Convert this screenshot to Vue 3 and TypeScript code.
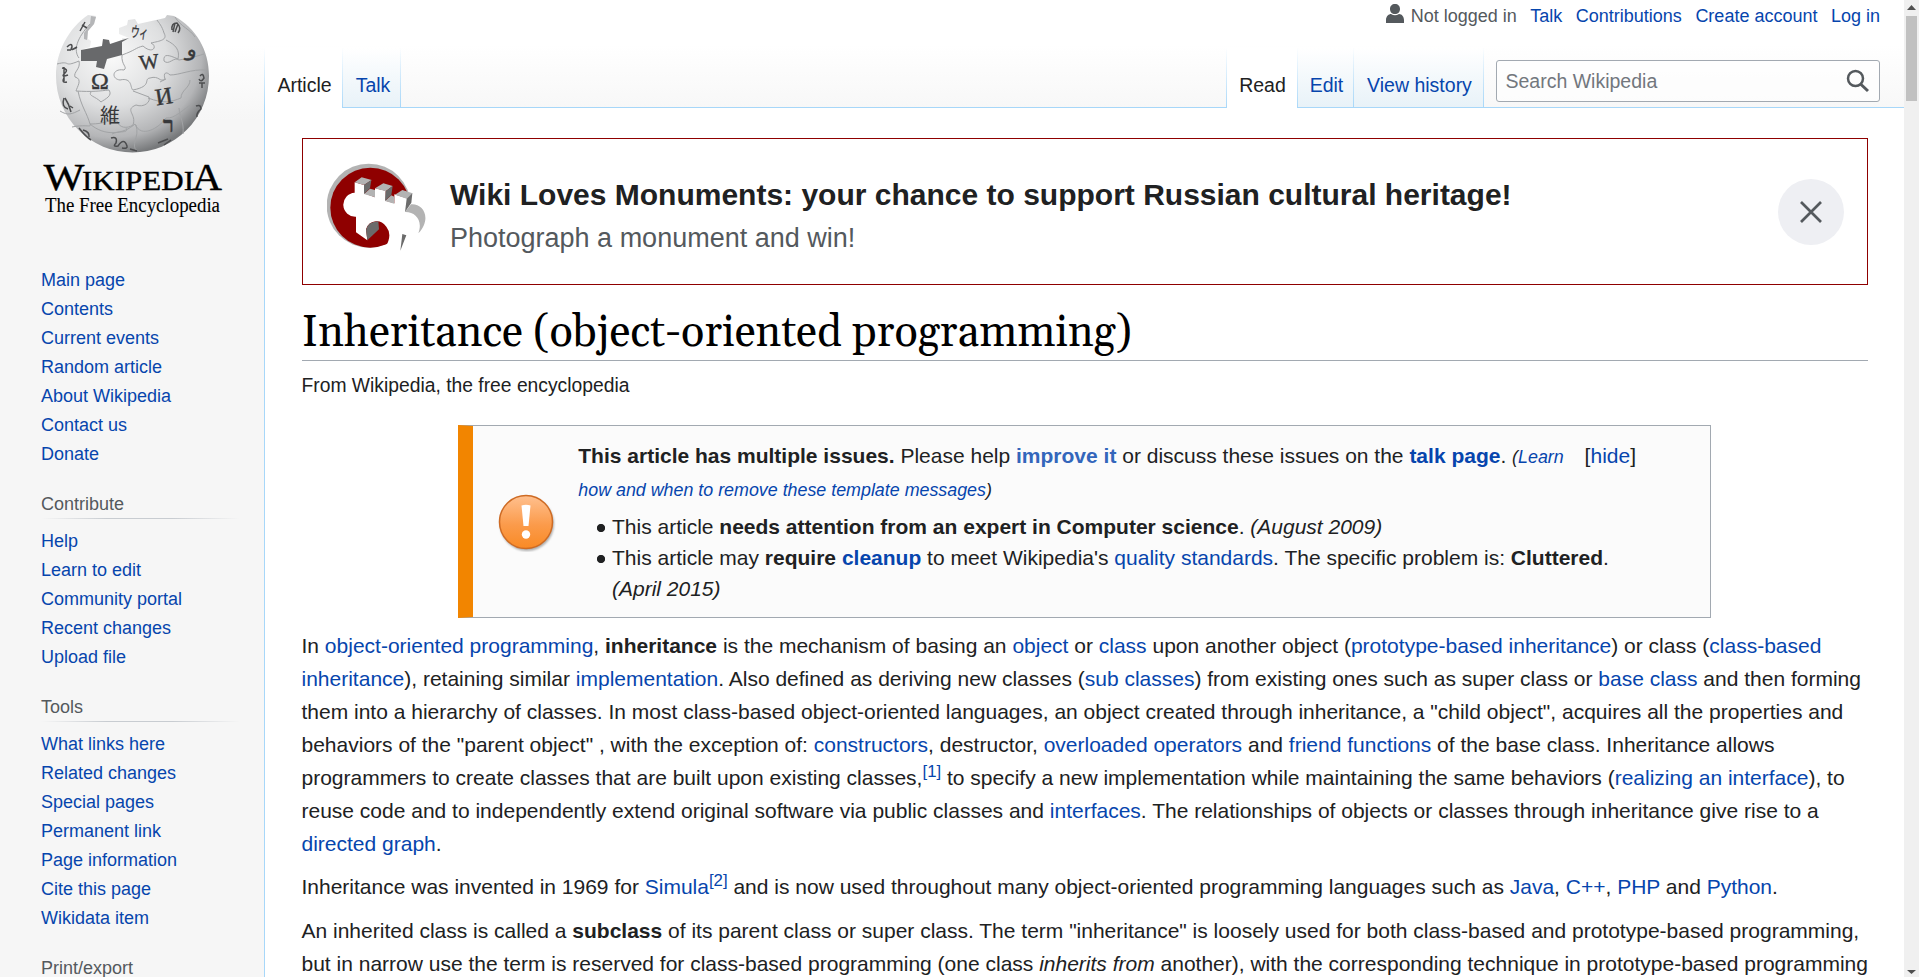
<script setup lang="ts">
interface Portal { title: string; links: string[] }
const mainLinks: string[] = ['Main page', 'Contents', 'Current events', 'Random article', 'About Wikipedia', 'Contact us', 'Donate']
const portals: Portal[] = [
  { title: 'Contribute', links: ['Help', 'Learn to edit', 'Community portal', 'Recent changes', 'Upload file'] },
  { title: 'Tools', links: ['What links here', 'Related changes', 'Special pages', 'Permanent link', 'Page information', 'Cite this page', 'Wikidata item'] },
  { title: 'Print/export', links: [] },
]
const personal: string[] = ['Talk', 'Contributions', 'Create account', 'Log in']
</script>

<template>
  <div class="page">
    <aside class="side">
      <svg class="logo" width="264" height="240" viewBox="0 0 264 240">
        <defs>
          <radialGradient id="globe" cx="0.36" cy="0.3" r="0.72">
            <stop offset="0" stop-color="#fafafa" />
            <stop offset="0.5" stop-color="#dedfe0" />
            <stop offset="0.82" stop-color="#b4b5b7" />
            <stop offset="1" stop-color="#77797b" />
          </radialGradient>
        </defs>
        <path d="M88 15 L96 16 L94 24 L88 31 L88 39 L91 41 L90 47 L81 50 L81 60 L122 54 L122 38 L129 38 L119 34 L119 28 L127 25 L128 20 L135 19 L138 24 L165 18 L167 15 L174 16 C196 28 209 50 209 76 A76.500 76.500 0 0 1 56 76 C56 51 69 28 88 15Z" fill="url(#globe)" />
        <path d="M91 16 L96 17 L94 24 L88 31 L87 40 L84 39 L84 33 L90 24Z" fill="#b5b6b8" />
        <path d="M81 50 L102 46 L103 39 L109 40 L110 44 L122 40 L129 38 L122 42 L122 55 L107 59 L104 69 L96 67 L97 61 L81 61Z" fill="#68696b" />
        <g fill="none" stroke="#a1a3a5" stroke-width="1">
          <path d="M57 64 C72 60 62 68 79 61 C81 69 73 72 75 77 C83 79 77 87 76 91 C92 92 100 91 109 90 C113 96 105 99 101 102 C95 96 88 96 91 92" />
          <path d="M122 55 C121 65 128 67 124 70 C112 68 111 79 120 80 C133 77 130 89 133 90 C153 86 143 79 150 78 C159 75 160 83 165 79 C163 73 166 71 170 75 C180 75 191 69 206 70" />
          <path d="M122 55 C136 50 135 48 143 46 C153 55 158 46 151 43 C160 41 168 40 164 33 C162 26 159 23 157 20" />
          <path d="M166 40 C176 45 180 50 178 59 C169 55 163 53 164 61 C169 66 174 56 179 60 C191 58 201 55 204 54" />
          <path d="M78 91 C81 106 87 113 90 124 C107 124 108 119 117 121 C119 128 127 129 133 125 C137 114 124 110 136 105 C144 108 151 102 149 97 L133 91" />
          <path d="M148 98 C164 104 171 102 181 98 C181 90 190 88 190 80 M160 82 L166 79 M60 111 C68 116 72 114 80 110 M72 127 C86 124 92 128 90 124 C105 137 124 134 135 124 C141 139 159 128 166 118 C175 119 183 109 191 105" />
          <path d="M136 125 C140 137 130 145 137 151 M112 134 C120 130 129 134 126 128 M179 108 C180 119 184 121 183 134 M90 24 C77 38 73 50 79 58 M175 17 C181 27 190 29 195 37" />
        </g>
        <g fill="#37383a" stroke="#37383a" stroke-width="0.400" font-family="'Liberation Serif','Noto Sans CJK JP',serif">
          <text x="91" y="89" font-size="24">Ω</text>
          <text x="139" y="69" font-size="21" transform="rotate(-7 148 62)">W</text>
          <text x="155" y="104" font-size="24" transform="rotate(-9 165 95)">И</text>
          <text x="100" y="123" font-size="20" stroke="none">維</text>
          <text x="163" y="132" font-size="22" font-weight="bold">ר</text>
          <text x="131" y="38" font-size="15" transform="rotate(8 140 32)" textLength="17" lengthAdjust="spacingAndGlyphs">ウィ</text>
          <text x="187" y="56" font-size="21" transform="rotate(15 192 50)">و</text>
        </g>
        <g fill="none" stroke="#4c4d4f" stroke-width="1.500">
          <path d="M80 31 l5 -9 M82 25 l5 3 M67 47 q5 -5 5 0 q-3 5 5 0 M67 50 l4 0 M62 68 q7 1 3 5 q-5 5 3 2 M64 78 q-3 5 3 4 M64 67 v14 M64 98 q-3 9 4 11 M65 98 q4 6 6 14 M70 106 l3 2 M79 128 q7 9 12 12 M83 130 q7 2 6 7 M111 138 q7 -2 5 5 q-4 4 2 3 q6 -9 9 0 q1 3 -5 2 M158 143 l10 -4 M164 145 l7 -5 M130 149 l7 2 M196 106 q5 -2 5 3 q-5 4 -4 8 M200 76 q3 -4 4 2 q-3 5 -5 1 M199 83 h6 M202 83 v5" />
          <path d="M172 30 q-1 -7 5 -7 q5 5 1 10 M175 23 l-2 9 M178 24 l-3 8" />
        </g>
        <g fill="#000" stroke="#000" font-family="'Liberation Serif',serif">
          <g stroke-width="0.350">
            <text x="43.500" y="190" font-size="38" textLength="41" lengthAdjust="spacingAndGlyphs">W</text>
            <text x="82" y="190" font-size="28" textLength="112" lengthAdjust="spacingAndGlyphs">IKIPEDI</text>
            <text x="192" y="190" font-size="38" textLength="30" lengthAdjust="spacingAndGlyphs">A</text>
          </g>
          <text x="45" y="212" font-size="20.500" textLength="175" lengthAdjust="spacingAndGlyphs" stroke-width="0.100">The Free Encyclopedia</text>
        </g>
      </svg>
      <nav class="portal first"><a v-for="l in mainLinks" :key="l">{{ l }}</a></nav>
      <nav v-for="p in portals" :key="p.title" class="portal">
        <h3>{{ p.title }}</h3>
        <a v-for="l in p.links" :key="l">{{ l }}</a>
      </nav>
    </aside>

    <div class="main">
      <header class="head">
        <div class="personal">
          <svg width="18" height="20" viewBox="0 0 18 20"><path d="M9 0 C12 0 14 2 14 5 C14 8 12 10 9 10 C6 10 4 8 4 5 C4 2 6 0 9 0 M0 19 V16 C0 12 3 10 5 10 Q9 12.500 13 10 C16 10 18 13 18 16 V19Z" fill="#54595d" /></svg>
          <span class="anon">Not logged in</span>
          <a v-for="l in personal" :key="l">{{ l }}</a>
        </div>
        <div class="tabs">
          <div class="tab on article">Article</div>
          <div class="tab talk">Talk</div>
          <div class="gap"></div>
          <div class="tab on read">Read</div>
          <div class="tab edit">Edit</div>
          <div class="tab hist">View history</div>
          <div class="searchwrap">
            <div class="search">
              <span>Search Wikipedia</span>
              <svg width="24" height="24" viewBox="0 0 24 24" fill="none" stroke="#54595d" stroke-width="2.500"><circle cx="9.500" cy="9.500" r="7.500" /><path d="M14.500 15 L22 22" stroke-width="3" /></svg>
            </div>
          </div>
        </div>
      </header>

      <main class="content">
        <section class="banner">
          <svg class="wlm" width="101" height="90" viewBox="36 39 303 270">
            <circle cx="161" cy="167" r="126" fill="#b3b3b3" />
            <circle cx="166" cy="173" r="120" fill="#8f0000" />
            <path d="M119 97 L147 105 V130 L180 142 V115 L212 122 V152 L238 160 V133 L275 145 L293 118 L345 118 V330 H205 L210 295 Q234 255 214 230 Q200 212 183 214 Q160 216 153 238 L157 271 L123 247 V200 A36 36 0 1 1 119 128Z" fill="#fff" />
            <path d="M119 97 L140 82 L170 90 L147 105Z M147 132 L165 116 L180 120 V142Z M180 115 L205 100 L233 108 L212 124Z M210 153 L229 136 L238 140 V161Z M240 134 L262 120 L293 130 L275 146Z M270 186 L288 163 C325 160 352 205 310 250 C325 210 300 185 270 186Z" fill="#b3b3b3" />
            <path d="M147 105 L169 90 L165 115 L147 132Z M212 124 L233 108 L229 135 L210 153Z M275 146 L292 130 L289 158 L270 186Z M157 271 L153 240 Q158 215 190 214 L192 238Z M262 252 L274 256 L256 302Z" fill="#6b6b6b" />
          </svg>
          <div class="pitch">
            <strong>Wiki Loves Monuments: your chance to support Russian cultural heritage!</strong>
            <span>Photograph a monument and win!</span>
          </div>
          <button class="close" aria-label="Close"><svg width="22" height="22" viewBox="0 0 22 22"><path d="M1 1 L21 21 M21 1 L1 21" stroke="#54595d" stroke-width="2.700" /></svg></button>
        </section>

        <h1><span>Inheritance (object-oriented programming)</span></h1>
        <div class="sub">From Wikipedia, the free encyclopedia</div>

        <section class="ambox">
          <svg class="warn" width="60" height="60" viewBox="0 0 60 60">
            <defs>
              <linearGradient id="orange" x1="0" y1="0" x2="0" y2="1"><stop offset="0" stop-color="#ffc08f" /><stop offset="0.550" stop-color="#fb9b4b" /><stop offset="1" stop-color="#f98a25" /></linearGradient>
              <filter id="shade"><feGaussianBlur stdDeviation="1.200" /></filter>
            </defs>
            <circle cx="31" cy="32" r="27" fill="#777" opacity="0.600" filter="url(#shade)" />
            <circle cx="30" cy="30" r="26.500" fill="url(#orange)" stroke="#ce6b24" stroke-width="1.500" />
            <path d="M25.500 13.500 Q30 12 34.500 13.500 L32.500 34 H27.500Z" fill="#fff" />
            <circle cx="30" cy="42.500" r="4.200" fill="#fff" />
          </svg>
          <div class="issues">
            <div class="issue-head">
              <span class="hide">[<a>hide</a>]</span>
              <b>This article has multiple issues.</b> Please help <b><a class="ext">improve it</a></b> or discuss these issues on the <b><a>talk page</a></b>. <small><i>(<a>Learn how and when to remove these template messages</a>)</i></small>
            </div>
            <ul>
              <li>This article <b>needs attention from an expert in Computer science</b>. <i>(August 2009)</i></li>
              <li>This article may <b>require <a>cleanup</a></b> to meet Wikipedia's <a>quality standards</a>. The specific problem is: <b>Cluttered</b>. <i>(April 2015)</i></li>
            </ul>
          </div>
        </section>

        <p class="lead">In <a>object-oriented programming</a>, <b>inheritance</b> is the mechanism of basing an <a>object</a> or <a>class</a> upon another object (<a>prototype-based inheritance</a>) or class (<a>class-based inheritance</a>), retaining similar <a>implementation</a>. Also defined as deriving new classes (<a>sub classes</a>) from existing ones such as super class or <a>base class</a> and then forming them into a hierarchy of classes. In most class-based object-oriented languages, an object created through inheritance, a "child object", acquires all the properties and behaviors of the "parent object" , with the exception of: <a>constructors</a>, destructor, <a>overloaded operators</a> and <a>friend functions</a> of the base class. Inheritance allows programmers to create classes that are built upon existing classes,<sup><a>[1]</a></sup> to specify a new implementation while maintaining the same behaviors (<a>realizing an interface</a>), to reuse code and to independently extend original software via public classes and <a>interfaces</a>. The relationships of objects or classes through inheritance give rise to a <a>directed graph</a>.</p>
        <p>Inheritance was invented in 1969 for <a>Simula</a><sup><a>[2]</a></sup> and is now used throughout many object-oriented programming languages such as <a>Java</a>, <a>C++</a>, <a>PHP</a> and <a>Python</a>.</p>
        <p class="last">An inherited class is called a <b>subclass</b> of its parent class or super class. The term "inheritance" is loosely used for both class-based and prototype-based programming, but in narrow use the term is reserved for class-based programming (one class <i>inherits from</i> another), with the corresponding technique in prototype-based programming</p>
      </main>
    </div>

    <div class="scroll">
      <svg width="15" height="16" viewBox="0 0 15 16"><path d="M3 10 L7.500 5 L12 10Z" fill="#505050" /></svg>
      <div class="thumb"></div>
      <svg class="down" width="15" height="16" viewBox="0 0 15 16"><path d="M3 9 L7.500 13 L12 9Z" fill="#505050" /></svg>
    </div>
  </div>
</template>

<style>
html, body { margin: 0; overflow: hidden; }
</style>
<style scoped>
.page { display: flex; width: 1919px; height: 977px; overflow: hidden; background: linear-gradient(#fff 45px, #f6f6f6 120px); font-family: "Liberation Sans", Arial, sans-serif; color: #202122; }
a { color: #0645ad; }
.side { width: 264px; flex: none; }
.logo { display: block; }
.portal { margin: 0 24px 0 41px; font-size: 18px; padding-bottom: 17px; }
.portal.first { padding-top: 25.500px; }
.portal a { display: block; height: 29px; line-height: 29px; }
.portal h3 { margin: 0 0 8px; height: 33px; line-height: 37px; font-size: 18px; font-weight: 400; color: #54595d; background: linear-gradient(to right, rgba(200,204,209,0), #c8ccd1 33%, #c8ccd1 66%, rgba(200,204,209,0)) bottom / 100% 1px no-repeat; }
.main { width: 1640px; flex: none; display: flex; flex-direction: column; }
.head { height: 108px; flex: none; display: flex; flex-direction: column; justify-content: space-between; }
.personal { height: 32px; padding-right: 24px; display: flex; justify-content: flex-end; gap: 13.500px; font-size: 18px; line-height: 32px; white-space: nowrap; }
.personal svg { margin: 4px -6.500px 0 0; }
.anon { color: #54595d; }
.tabs { height: 60px; display: flex; font-size: 19.500px; color: #0645ad; white-space: nowrap; }
.tab { box-sizing: border-box; height: 60px; padding: 24px 0 0 2px; line-height: 27px; text-align: center; border-right: 1px solid; border-bottom: 1px solid #a7d7f9; border-image: linear-gradient(rgba(167,215,249,0), #a7d7f9) 1; background: linear-gradient(#fff, #e8f2f8); }
.tab.on { background: #fff; color: #202122; border-bottom: 0; }
.article { width: 79px; border-left: 1px solid; }
.talk { width: 58px; padding-left: 3px; }
.gap { flex: 1; border-bottom: 1px solid #a7d7f9; }
.read { width: 72px; border-left: 1px solid; padding-left: 1px; }
.edit { width: 56px; }
.hist { width: 130px; }
.searchwrap { box-sizing: border-box; width: 420px; padding: 12px 24px 0 12px; border-bottom: 1px solid #a7d7f9; }
.search { box-sizing: border-box; height: 42px; border: 1px solid #a2a9b1; border-radius: 3px; background: rgba(255,255,255,.6); display: flex; align-items: center; justify-content: space-between; padding: 0 9px 0 8.500px; color: #72777d; }
.content { flex: 1; background: #fff; border-left: 1px solid #a7d7f9; padding: 30px 36px 0 36.500px; font-size: 21px; line-height: 33px; min-height: 0; }
.banner { box-sizing: border-box; height: 147px; border: 1px solid #8f0000; display: flex; align-items: center; padding: 0 23px 0 24px; }
.wlm { flex: none; margin: -7px 22.500px 0 0; }
.pitch { flex: 1; display: flex; flex-direction: column; color: #54595d; font-size: 27px; line-height: 42px; padding-top: 10px; }
.pitch strong { color: #202122; font-size: 30px; line-height: 40px; padding-bottom: 2px; }
.close { width: 66px; height: 66px; border: 0; border-radius: 50%; background: #eeeff3; display: grid; place-items: center; padding: 0; }
h1 { margin: 18px 0 0; height: 57px; font: 400 43.200px/62px Georgia, Gelasio, "Liberation Serif", serif; color: #000; border-bottom: 1px solid #a2a9b1; white-space: nowrap; }
.sub { font-size: 19.300px; line-height: 29px; margin-top: 10px; }
.ambox { box-sizing: border-box; width: 1253px; height: 193px; margin: 25px 0 11px 156.500px; border: 1px solid #a2a9b1; border-left: 15px solid #f28500; background: #fbfbfb; display: flex; }
.warn { margin: 66px 22px 0 23px; flex: none; }
.issues { flex: 1; padding: 13px 74px 0 .300px; }
.hide { float: right; margin-left: 16px; }
.ext { color: #36b; }
small { font-size: 17.850px; line-height: 1; }
ul { list-style: none; margin: 6px 0 0; padding: 0 0 0 17.700px; line-height: 31px; }
li { padding-left: 16px; background: radial-gradient(circle at 5px 17px, #202122 3.700px, transparent 4.500px); }
p { margin: 0 0 11px; }
.lead { margin-bottom: 10px; }
.last { margin-right: -4px; }
sup { font-size: 16.800px; line-height: 0; vertical-align: super; }
.scroll { width: 15px; flex: none; background: #f0f0f0; display: flex; flex-direction: column; }
.thumb { width: 11px; height: 85px; margin-left: 2px; background: #c1c1c1; }
.down { margin-top: auto; }
</style>
